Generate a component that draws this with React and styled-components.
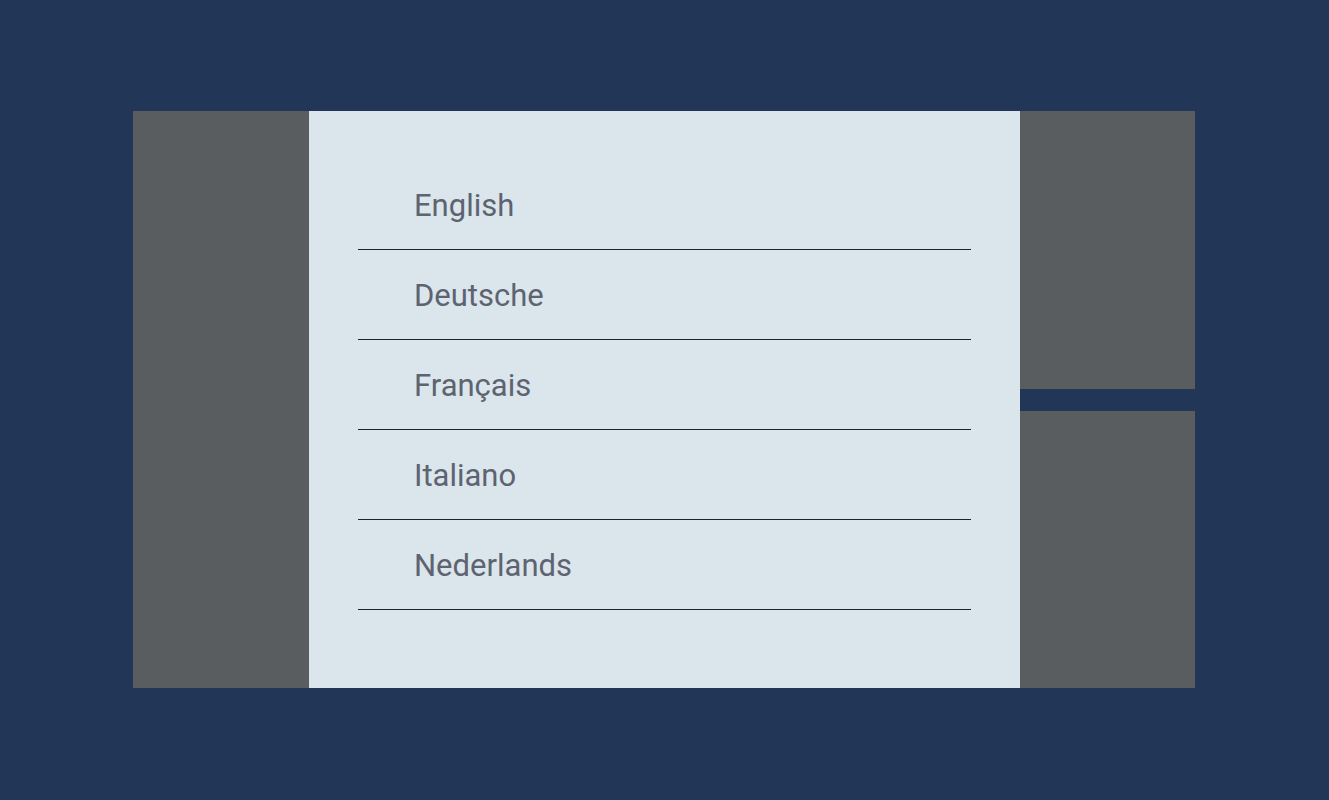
import React from "react";
import styled, { createGlobalStyle } from "styled-components";

const GlobalStyle = createGlobalStyle`
  html, body {
    margin: 0;
    padding: 0;
    background: #223658;
    font-family: Roboto, "Liberation Sans", sans-serif;
  }
`;

const languages = ["English", "Deutsche", "Français", "Italiano", "Nederlands"];

function App() {
  return (
    <>
      <GlobalStyle />
      <Page>
        <Frame>
          <SidePanel />
          <Menu>
            <List>
              {languages.map((lang) => (
                <Item key={lang}>{lang}</Item>
              ))}
            </List>
          </Menu>
          <RightColumn>
            <SidePanel />
            <SidePanel />
          </RightColumn>
        </Frame>
      </Page>
    </>
  );
}

export default App;

const Page = styled.div`
  width: 1329px;
  height: 800px;
  padding: 111px 0 0 133px;
  box-sizing: border-box;
  background: #223658;
`;

const Frame = styled.div`
  display: grid;
  grid-template-columns: 176px 711px 175px;
  height: 577px;
  width: 1062px;
`;

const SidePanel = styled.div`
  background: #5a5d60;
`;

const RightColumn = styled.div`
  display: grid;
  grid-template-rows: 278px 277px;
  row-gap: 22px;
`;

const Menu = styled.div`
  background: #dbe5ec;
  padding: 49px 49px 0 49px;
  box-sizing: border-box;
`;

const List = styled.div`
  display: flex;
  flex-direction: column;
`;

const Item = styled.div`
  height: 90px;
  display: flex;
  align-items: center;
  padding-left: 56px;
  padding-top: 2px;
  box-sizing: border-box;
  border-bottom: 1px solid #1e2328;
  font-size: 31px;
  color: #5d6370;
  cursor: pointer;
`;
